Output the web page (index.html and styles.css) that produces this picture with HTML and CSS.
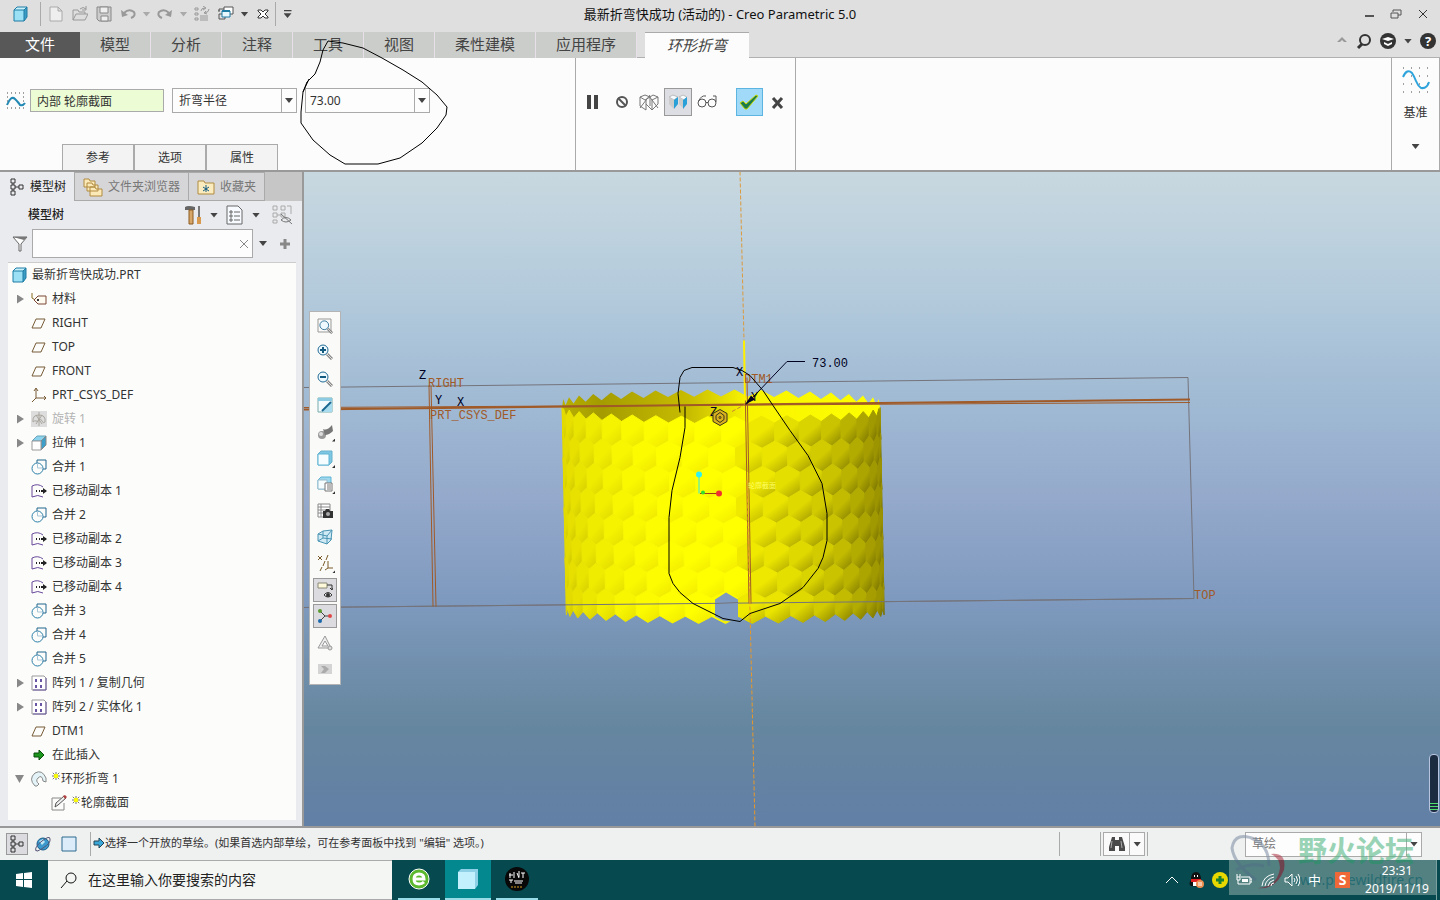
FILE: index.html
```html
<!doctype html>
<html lang="zh-CN">
	<head>
		<meta charset="utf-8">
		<title>最新折弯快成功 (活动的) - Creo Parametric 5.0</title>
		<link rel="stylesheet" href="styles.css">
	</head>
	<body>

		<svg class="defs" width="0" height="0">
			<symbol id="i-cube" viewBox="0 0 16 16"><path d="M2 4l3-3h10v10l-3 4H2z" fill="#9be0f4"/><path d="M12 4l3-3v10l-3 4z" fill="#3c9cc4"/><path d="M2 4l3-3h10l-3 3z" fill="#c9f1fb"/><path d="M2 4h10v11H2zM2 4l3-3h10v10l-3 4M12 4l3-3" fill="none" stroke="#1f7ca5"/></symbol>
			<symbol id="i-new" viewBox="0 0 16 16"><path d="M2 1h8l4 4v10H2zM10 1v4h4" fill="#eee" stroke="#aaa"/></symbol>
			<symbol id="i-open" viewBox="0 0 16 16"><path d="M1 14V4h5l1 2h6v2M1 14l3-6h12l-3 6z" fill="#ddd" stroke="#999"/><path d="M8 3q3-3 6 0M14 0v4h-4" fill="none" stroke="#999"/></symbol>
			<symbol id="i-save" viewBox="0 0 16 16"><path d="M1 1h14v14H3l-2-2z" fill="#ccc" stroke="#888"/><path d="M4 1h8v6H4zM5 10h7v5H5z" fill="#eee" stroke="#888"/></symbol>
			<symbol id="i-undo" viewBox="0 0 16 16"><path d="M4 7q5-5 10-1q2 4-3 6" fill="none" stroke="#999" stroke-width="2"/><path d="M1 4l1 7 6-2z" fill="#999"/></symbol>
			<symbol id="i-redo" viewBox="0 0 16 16"><path d="M12 7q-5-5-10-1q-2 4 3 6" fill="none" stroke="#999" stroke-width="2"/><path d="M15 4l-1 7-6-2z" fill="#999"/></symbol>
			<symbol id="i-regen" viewBox="0 0 16 16"><path d="M1 2h3v2H1zM1 7h3v2H1zM1 12h3v2H1zM6 10h8M6 12h8M6 14h8M7 5q0-3 4-3M9 0l3 2-3 2M15 3q0 3-4 4M13 8l-3-1 2-2" fill="none" stroke="#999"/></symbol>
			<symbol id="i-windows" viewBox="0 0 16 16"><path d="M1 5V3h5M1 6v-2M1 8h3M1 8v5h6v-2" fill="none" stroke="#555"/><path d="M6 1h9v7H6z" fill="#fff" stroke="#555"/><path d="M4 5h8v6H4z" fill="#e8f8ff" stroke="#1f7ca5"/><path d="M4 5h8" stroke="#1f7ca5" stroke-width="2"/></symbol>
			<symbol id="i-closewin" viewBox="0 0 16 16"><path d="M3 4h3l2 2 2-2h3v1l-3 3 3 3v1h-3l-2-2-2 2H3v-1l3-3-3-3z" fill="#fff" stroke="#333"/></symbol>
			<symbol id="i-x" viewBox="0 0 16 16"><path d="M4 4l8 8M12 4l-8 8" fill="none" stroke="currentColor" stroke-width="1"/></symbol>
			<symbol id="i-curve" viewBox="0 0 32 32"><path d="M3 3h1M11 3h1M19 3h1M27 3h1M3 11h1M11 11h1M19 11h1M27 11h1M3 19h1M11 19h1M19 19h1M27 19h1M3 27h1M11 27h1M19 27h1M27 27h1" stroke="#444"/><path d="M3 12q4-9 9-4q2 3 4 8t5 7q6 1 8-6" fill="none" stroke="#2fa4dc" stroke-width="2"/></symbol>
			<symbol id="i-wave" viewBox="0 0 20 18"><path d="M1 1h1M5 1h1M9 1h1M13 1h1M17 1h1M1 5h1M17 5h1M1 9h1M17 9h1M1 16h1M5 16h1M9 16h1M13 16h1M17 16h1" stroke="#444"/><path d="M1 13q4-10 8-6t5 6q3 1 5-2" fill="none" stroke="#2388b4" stroke-width="2"/></symbol>
			<symbol id="i-tree" viewBox="0 0 16 18"><path d="M2 1h4v4H2zM2 7h4v4H2zM2 13h4v4H2zM10 7h4v4h-4zM4 5v2M4 11v2M6 9h4" fill="none" stroke="#333"/></symbol>
			<symbol id="i-folders" viewBox="0 0 20 20"><path d="M1 2h5l1 2h5v6H1zM4 6h5l1 2h5v6H4zM7 10h5l1 2h6v7H7z" fill="#fbe9b8" stroke="#b08b40"/></symbol>
			<symbol id="i-fav" viewBox="0 0 18 16"><path d="M1 2h6l1 2h9v11H1z" fill="#fbecc0" stroke="#b08b40"/><path d="M9 6v7M6 8l6 4M12 8l-6 4" stroke="#125a80"/></symbol>
			<symbol id="i-tools" viewBox="0 0 18 20"><path d="M1 2q3-2 10 0v3H1z" fill="#666"/><path d="M5 5h4v14H5z" fill="#d7a76a" stroke="#8a5a20"/><path d="M15 1v11" stroke="#777" stroke-width="2"/><path d="M13 12h4v7h-4z" fill="#d79a4e"/></symbol>
			<symbol id="i-list" viewBox="0 0 18 20"><path d="M1 1h11l4 4v14H1z" fill="#f7fbff" stroke="#666"/><path d="M4 6h2v2H4zM4 10h2v2H4zM4 14h2v2H4zM8 7h6M8 11h6M8 15h6" fill="none" stroke="#666"/></symbol>
			<symbol id="i-treehide" viewBox="0 0 20 20"><path d="M1 1h4v4H1zM1 8h4v4H1zM1 15h4v3H1zM9 1h4v4H9zM9 8h4v4H9zM15 1h4v8M5 10h4" fill="none" stroke="#aaa"/><path d="M9 15q5-5 10 0q-5 4-10 0M9 9l11 10" fill="none" stroke="#777"/></symbol>
			<symbol id="i-filter" viewBox="0 0 16 16"><path d="M1 1h14L9 8v7H7V8z" fill="#fff" stroke="#666"/><path d="M1 1h14l-3 3z" fill="#777"/></symbol>
			<symbol id="i-tag" viewBox="0 0 16 16"><path d="M1 2v5l5 3" fill="none" stroke="#8a6a20"/><path d="M3 9l4-4h8v8H7z" fill="#fffaf0" stroke="#7a4636"/><path d="M6 9h2" stroke="#333" stroke-width="2"/></symbol>
			<symbol id="i-plane" viewBox="0 0 16 16"><path d="M5 4h9l-4 9H1z" fill="none" stroke="#775a35"/></symbol>
			<symbol id="i-csys" viewBox="0 0 16 16"><path d="M5 2v9h10M5 11l-4 4M3 4l2-3 2 3M13 9l2 2-2 2" fill="none" stroke="#775a35"/></symbol>
			<symbol id="i-revolve" viewBox="0 0 16 16"><path d="M0 0h16v16H0z" fill="#ddd"/><path d="M2 11q-1-7 6-7t6 7q-2 2-3-1t-3-1-3 1-3 1zM8 1v14M5 4l6 9M11 4l-6 9" fill="none" stroke="#aaa69e"/></symbol>
			<symbol id="i-extrude" viewBox="0 0 16 16"><path d="M1 6l5-5h9l-5 5z" fill="#8cd4ee" stroke="#6aa4bb"/><path d="M10 6l5-5v9l-5 5z" fill="#3e9fc8" stroke="#888"/><path d="M1 6h9v9H1z" fill="#fff" stroke="#999"/></symbol>
			<symbol id="i-merge" viewBox="0 0 16 16"><path d="M6 4V1h9v9h-3" fill="none" stroke="#22648d"/><circle cx="6.500" cy="9.500" r="5.500" fill="none" stroke="#2d7fa8"/><path d="M6.500 4v5h5" fill="none" stroke="#aac6d8"/></symbol>
			<symbol id="i-copy" viewBox="0 0 16 16"><path d="M1 14V3q6-3 11 1M1 14q6-3 11 0" fill="none" stroke="#68499a"/><path d="M5 8h1M8 8h1M10 8h5" fill="none" stroke="#222" stroke-width="2"/><path d="M12 5l4 3-4 3z" fill="#222"/></symbol>
			<symbol id="i-pattern" viewBox="0 0 16 16"><path d="M1 1h12l2 2v12H1z" fill="#fff" stroke="#999"/><path d="M15 3v12H2" fill="none" stroke="#6a58a0"/><path d="M4 4h2v3H4zM9 4h2v3H9zM4 10h2v3H4zM9 10h2v3H9z" fill="#6a54a4"/></symbol>
			<symbol id="i-insert" viewBox="0 0 16 16"><path d="M3 6h5V3l5 5-5 5v-3H3z" fill="#1d961d" stroke="#0a4d0a"/></symbol>
			<symbol id="i-bend" viewBox="0 0 16 16"><path d="M4 15Q-3 8 4 2q7-4 11 5v4l-3-1Q11 3 7 7q-3 3 1 6l-2 2z" fill="#e3f3f7" stroke="#888"/></symbol>
			<symbol id="i-sketch" viewBox="0 0 16 16"><path d="M10 3H1v12h12V8" fill="none" stroke="#888"/><path d="M4 12l1-4 8-7 2 2-8 7z" fill="#eee" stroke="#555"/><path d="M12 1l2-1 2 2-2 2z" fill="#b04040"/></symbol>
			<symbol id="i-star" viewBox="0 0 10 10"><path d="M5 0v10M0 5h10M1 1l8 8M9 1L1 9" stroke="#555"/><path d="M3 3h4v4H3z" fill="#ff0" stroke="#ff0"/></symbol>
			<symbol id="i-globe" viewBox="0 0 16 16"><circle cx="8" cy="8" r="6" fill="#3a98cc" stroke="#1a5e88"/><path d="M4 5l4-2 2 3-3 3z" fill="#bfe4f4"/><path d="M1 15Q-1 11 7 5t8-2q1 4-7 9t-6 2" fill="none" stroke="#557"/></symbol>
			<symbol id="i-pane" viewBox="0 0 16 16"><path d="M1 1h14v14H1z" fill="#dcecf8" stroke="#2c6b8f"/></symbol>
			<symbol id="i-arrow" viewBox="0 0 12 12"><path d="M1 4h5V1l5 5-5 5V8H1z" fill="#3ba6d8" stroke="#245"/></symbol>
			<symbol id="i-binoc" viewBox="0 0 18 16"><path d="M4 1h3v3h4V1h3l3 10v4h-6v-5H7v5H1v-4z" fill="#4a4a4a"/><path d="M4 5l-1 7M13 5l1 7" stroke="#aaa"/></symbol>
			<symbol id="i-lens" viewBox="0 0 16 16"><path d="M10 10l5 5" stroke="#888" stroke-width="3"/><path d="M10 10l5 5" stroke="#ddd"/><circle cx="6" cy="6" r="5" fill="#eefaff" stroke="#226a94"/></symbol>
		</svg>

		<header class="titlebar">
			<div class="quick">
				<svg class="i16 app"><use href="#i-cube"/></svg>
				<span class="sep"></span>
				<button aria-label="新建"><svg class="i16"><use href="#i-new"/></svg></button>
				<button aria-label="打开"><svg class="i16"><use href="#i-open"/></svg></button>
				<button aria-label="保存"><svg class="i16"><use href="#i-save"/></svg></button>
				<button aria-label="撤消"><svg class="i16"><use href="#i-undo"/></svg></button>
				<button class="drop" aria-label="撤消列表"><i class="caret dim"></i></button>
				<button aria-label="重做"><svg class="i16"><use href="#i-redo"/></svg></button>
				<button class="drop" aria-label="重做列表"><i class="caret dim"></i></button>
				<button aria-label="重新生成"><svg class="i16"><use href="#i-regen"/></svg></button>
				<button aria-label="窗口"><svg class="i16"><use href="#i-windows"/></svg></button>
				<button class="drop" aria-label="窗口列表"><i class="caret"></i></button>
				<button aria-label="关闭"><svg class="i16"><use href="#i-closewin"/></svg></button>
				<span class="sep"></span>
				<button class="drop" aria-label="自定义"><i class="caret lined"></i></button>
			</div>
			<div class="title">最新折弯快成功 (活动的) - Creo Parametric 5.0</div>
			<div class="win">
				<button aria-label="最小化"><svg class="i16" viewBox="0 0 16 16"><path d="M4 10h9" stroke="#555" stroke-width="2"/></svg></button>
				<button aria-label="还原"><svg class="i16" viewBox="0 0 16 16"><path d="M5 6V4h8v5h-3M3 7h7v5H3z" fill="none" stroke="#555"/></svg></button>
				<button aria-label="关闭窗口"><svg class="i16"><use href="#i-x"/></svg></button>
			</div>
		</header>

		<nav class="tabs">
			<button class="tab file">文件</button>
			<button class="tab">模型</button>
			<button class="tab">分析</button>
			<button class="tab">注释</button>
			<button class="tab">工具</button>
			<button class="tab">视图</button>
			<button class="tab">柔性建模</button>
			<button class="tab">应用程序</button>
			<button class="tab active">环形折弯</button>
			<div class="help">
				<svg width="12" height="16" viewBox="0 0 12 16"><path d="M1 9l5-5 5 5H8L6 7 4 9z" fill="#999"/></svg>
				<svg width="16" height="18" viewBox="0 0 16 18"><circle cx="9" cy="8" r="5" fill="none" stroke="#333" stroke-width="2"/><path d="M6 12l-4 4" stroke="#333" stroke-width="3"/></svg>
				<svg width="16" height="18" viewBox="0 0 16 18"><circle cx="8" cy="9" r="8" fill="#333"/><path d="M2 7l6-2 6 2-6 2zM4 10l4 2 4-2v2l-4 2-4-2z" fill="#fff"/></svg>
				<i class="caret"></i>
				<span class="ask">?</span>
			</div>
		</nav>

		<section class="ribbon">
			<div class="group feature">
				<div class="fields">
					<svg width="20" height="18"><use href="#i-wave"/></svg>
					<input class="section" type="text" aria-label="轮廓截面" value="内部 轮廓截面">
					<div class="combo">
						<select aria-label="折弯方式"><option>折弯半径</option></select>
						<span class="open"><i class="caret"></i></span>
					</div>
					<div class="combo radius">
						<input type="text" aria-label="折弯半径" value="73.00">
						<button class="open" aria-label="最近的值"><i class="caret"></i></button>
					</div>
				</div>
				<div class="panels">
					<button>参考</button>
					<button>选项</button>
					<button>属性</button>
				</div>
			</div>
			<div class="group control">
				<button aria-label="暂停"><svg class="i20" viewBox="0 0 20 20"><path d="M5 3h4v14H5zM12 3h4v14h-4z" fill="#444"/></svg></button>
				<button aria-label="无预览"><svg class="i20" viewBox="0 0 20 20"><circle cx="11" cy="10" r="5" fill="none" stroke="#555" stroke-width="2"/><path d="M7 6l8 8" stroke="#555" stroke-width="2"/></svg></button>
				<button aria-label="分离预览"><svg class="i20" viewBox="0 0 20 20"><path d="M1 5l5-2 5 2-5 3zM1 5v9l6 4V8M11 5l3-2 5 2-6 3v10l-6-6M11 5v9M19 5v7l-6 6M1 16L11 3M10 4l9 12" fill="none" stroke="#777"/></svg></button>
				<button class="on" aria-label="连接预览"><svg class="i20" viewBox="0 0 20 20"><path d="M1 5l4-2 5 2-4 3zM11 5l4-2 4 2-3 3z" fill="#f5fbff" stroke="#bbb"/><path d="M1 5l5 3v9l-5-5zM11 5l5 3v9l-5-5z" fill="#ccc"/><path d="M6 8l4-3v7l-4 5zM15 8l4-3v7l-4 5z" fill="#2aa0d8"/></svg></button>
				<button aria-label="检查"><svg class="i20" viewBox="0 0 20 20"><circle cx="5" cy="11" r="4" fill="none" stroke="#555"/><circle cx="15" cy="11" r="4" fill="none" stroke="#555"/><path d="M2 9q2-6 7-5M9 11q1-2 2 0M19 10V4h-3" fill="none" stroke="#555"/></svg></button>
				<button class="ok" aria-label="确定"><svg class="i20" viewBox="0 0 20 20"><path d="M1 11l3-2 3 3 10-9 2 1L8 17H6z" fill="#1a7c4c" stroke="#c8d800"/></svg></button>
				<button aria-label="取消"><svg class="i20" viewBox="0 0 20 20"><path d="M5 6l9 10M14 6L5 16" stroke="#444" stroke-width="3"/></svg></button>
			</div>
			<div class="group empty"></div>
			<div class="group datum">
				<svg width="32" height="32"><use href="#i-curve"/></svg>
				<span>基准</span>
				<i class="caret"></i>
			</div>
		</section>

		<main>
			<aside>
				<div class="side-tabs">
					<button class="current"><svg width="16" height="18"><use href="#i-tree"/></svg>模型树</button>
					<button><svg width="20" height="20"><use href="#i-folders"/></svg>文件夹浏览器</button>
					<button><svg width="18" height="16"><use href="#i-fav"/></svg>收藏夹</button>
				</div>
				<div class="side-head">
					<h2>模型树</h2>
					<svg width="18" height="20"><use href="#i-tools"/></svg>
					<i class="caret"></i>
					<svg width="18" height="20"><use href="#i-list"/></svg>
					<i class="caret"></i>
					<svg width="20" height="20"><use href="#i-treehide"/></svg>
				</div>
				<div class="side-search">
					<svg class="i16"><use href="#i-filter"/></svg>
					<div class="box">
						<input type="text" aria-label="搜索模型树">
						<button aria-label="清除"><svg class="i16"><use href="#i-x"/></svg></button>
					</div>
					<i class="caret"></i>
					<svg width="14" height="14" viewBox="0 0 14 14"><path d="M7 2v10M2 7h10" stroke="#888" stroke-width="3"/></svg>
				</div>
				<ul class="tree">
					<li class="root"><svg class="i16"><use href="#i-cube"/></svg>最新折弯快成功.PRT</li>
					<li class="closed"><svg class="i16"><use href="#i-tag"/></svg>材料</li>
					<li><svg class="i16"><use href="#i-plane"/></svg>RIGHT</li>
					<li><svg class="i16"><use href="#i-plane"/></svg>TOP</li>
					<li><svg class="i16"><use href="#i-plane"/></svg>FRONT</li>
					<li><svg class="i16"><use href="#i-csys"/></svg>PRT_CSYS_DEF</li>
					<li class="closed muted"><svg class="i16"><use href="#i-revolve"/></svg>旋转 1</li>
					<li class="closed"><svg class="i16"><use href="#i-extrude"/></svg>拉伸 1</li>
					<li><svg class="i16"><use href="#i-merge"/></svg>合并 1</li>
					<li><svg class="i16"><use href="#i-copy"/></svg>已移动副本 1</li>
					<li><svg class="i16"><use href="#i-merge"/></svg>合并 2</li>
					<li><svg class="i16"><use href="#i-copy"/></svg>已移动副本 2</li>
					<li><svg class="i16"><use href="#i-copy"/></svg>已移动副本 3</li>
					<li><svg class="i16"><use href="#i-copy"/></svg>已移动副本 4</li>
					<li><svg class="i16"><use href="#i-merge"/></svg>合并 3</li>
					<li><svg class="i16"><use href="#i-merge"/></svg>合并 4</li>
					<li><svg class="i16"><use href="#i-merge"/></svg>合并 5</li>
					<li class="closed"><svg class="i16"><use href="#i-pattern"/></svg>阵列 1 / 复制几何</li>
					<li class="closed"><svg class="i16"><use href="#i-pattern"/></svg>阵列 2 / 实体化 1</li>
					<li><svg class="i16"><use href="#i-plane"/></svg>DTM1</li>
					<li><svg class="i16"><use href="#i-insert"/></svg>在此插入</li>
					<li class="opened"><svg class="i16"><use href="#i-bend"/></svg><svg class="star"><use href="#i-star"/></svg>环形折弯 1</li>
					<li class="child"><svg class="i16"><use href="#i-sketch"/></svg><svg class="star"><use href="#i-star"/></svg>轮廓截面</li>
				</ul>
			</aside>

			<div class="viewport">
				<svg class="scene" viewBox="304 171 1136 655" preserveAspectRatio="xMidYMid slice">
					<defs>
						<linearGradient id="inner"><stop offset="0" stop-color="#b8b000"/><stop offset=".12" stop-color="#a49c00"/><stop offset=".4" stop-color="#c8bc00"/><stop offset=".58" stop-color="#f8f400"/><stop offset="1" stop-color="#ff0"/></linearGradient>
					</defs>
					<g fill="none" stroke="#74747c">
						<path d="M304 387L1188 377L1194 598L304 607"/>
					</g>
					<path d="M740 171L744 340" fill="none" stroke="#dc9a3c" stroke-dasharray="4 2"/>
					<g id="part"></g>
					<path d="M304 607L1194 598" fill="none" stroke="#74747c"/>
					<path d="M715 599l11-7 12 7v19l-7 3-8-1-8-4z" fill="#7f9abf"/>
					<path d="M715 603l23-1" stroke="#74747c"/>
					<g fill="none" stroke="#a05a28">
						<path d="M304 409L1190 399" stroke-width="2"/>
						<path d="M304 407L1190 402"/>
						<path d="M429 385L433 606M431 385L436 606"/>
						<path d="M745 377L749 603M747 377L751 603"/>
					</g>
					<path d="M744 340L745 400" stroke="#fff000" stroke-width="2"/>
					<path d="M747 480L755 826" fill="none" stroke="#e89828" stroke-dasharray="4 2"/>
					<path d="M732 411l13-7" stroke="#c88830" stroke-dasharray="4 2"/>
					<g class="note brown">
						<text x="428" y="386">RIGHT</text>
						<text x="430" y="418">PRT_CSYS_DEF</text>
						<text x="744" y="382">DTM1</text>
						<text x="1194" y="598">TOP</text>
					</g>
					<g class="note">
						<text x="419" y="378">Z</text>
						<text x="435" y="403">Y</text>
						<text x="457" y="405">X</text>
						<text x="736" y="375">X</text>
						<text x="710" y="415">Z</text>
						<text x="751" y="400">Y</text>
						<text x="812" y="366">73.00</text>
					</g>
					<text class="tiny" x="748" y="487">轮廓截面</text>
					<path d="M746 404L787 361H805" fill="none" stroke="#002"/>
					<path d="M745 404l6-9 4 4z" fill="#002"/>
					<g fill="none" stroke="#3a3518">
						<path d="M720 409l7 4v8l-7 4-7-4v-8z" fill="#d8b020"/>
						<path d="M720 412l4 3v4l-4 3-4-3v-4z"/>
						<circle cx="720" cy="417" r="1"/>
					</g>
					<path d="M699 473v20" stroke="#30e8e0"/><path d="M700 493h19" stroke="#a04010"/>
					<circle cx="699" cy="474" r="3" fill="#30f0f0"/><circle cx="703" cy="492" r="2" fill="#30e030"/><circle cx="719" cy="493" r="3" fill="#f03030"/>
					<path class="ink" d="M680 412L678 393L680 377L684 370L692 367H733L742 370L750 375L763 390L773 405L790 430L808 455L822 483L827 513V540L823 557L818 568L803 587L780 603L750 613L740 621L723 618L693 603L680 592L673 583L669 573V517L672 490L680 457L685 427V406"/>
				</svg>

				<div class="view-tools">
					<button aria-label="重新调整"><svg class="i16" viewBox="0 0 16 16"><path d="M1 1h13v13H1z" fill="none" stroke="#999"/><use href="#i-lens" x="2" y="2" width="14" height="14"/></svg></button>
					<button aria-label="放大"><svg class="i16" viewBox="0 0 16 16"><use href="#i-lens" width="16" height="16"/><path d="M3 6h6M6 3v6" stroke="#125a80" stroke-width="2"/></svg></button>
					<button aria-label="缩小"><svg class="i16" viewBox="0 0 16 16"><use href="#i-lens" width="16" height="16"/><path d="M3 6h6" stroke="#125a80" stroke-width="2"/></svg></button>
					<button aria-label="重画"><svg class="i16" viewBox="0 0 16 16"><path d="M1 1h14v14H1z" fill="#f4fbff" stroke="#7aa"/><path d="M1 1h14v3H1z" fill="#8ccbe2"/><path d="M15 5v10H5z" fill="#a8dcee"/><path d="M5 14l9-9" stroke="#1a6890" stroke-width="2"/></svg></button>
					<button class="more" aria-label="渲染"><svg class="i16" viewBox="0 0 16 16"><circle cx="5" cy="11" r="4" fill="#999"/><path d="M6 5q4 2 9-4l1 6q-4 4-8 4z" fill="#777"/><circle cx="4" cy="10" r="2" fill="#ddd"/></svg></button>
					<button class="more" aria-label="显示样式"><svg class="i16" viewBox="0 0 16 16"><path d="M1 4l3-3h11v11l-3 3H1z" fill="#7cc8e4" stroke="#6ab0cc"/><path d="M1 4h11v11H1z" fill="#f5fdff" stroke="#5eb4d4"/></svg></button>
					<button class="more" aria-label="已保存方向"><svg class="i16" viewBox="0 0 16 16"><path d="M1 4l3-3h10v8l-3 4H1z" fill="#9cd8ee" stroke="#5eb4d4"/><path d="M1 4h9v9H1z" fill="#f5fdff" stroke="#9bc"/><path d="M8 7h7v8H8zM10 9h4M10 11h4M10 13h4" fill="#fff" stroke="#777"/></svg></button>
					<button aria-label="视图管理器"><svg class="i16" viewBox="0 0 16 16"><path d="M1 1h12v13H1zM1 4h12M1 7h12M1 10h12M4 1v13" fill="#fff" stroke="#888"/><path d="M6 8h2l1-2h3l1 2h3v7H6z" fill="#333"/><circle cx="11" cy="11" r="2" fill="#aaa"/></svg></button>
					<button aria-label="透视图"><svg class="i16" viewBox="0 0 16 16"><path d="M1 5l5-3 9-1-1 10-4 4-9-3z" fill="#cfeaf4" stroke="#4a94b4"/><path d="M1 5l9 2 5-6M10 7v8M6 2v7l9 1M6 9l-5 3" fill="none" stroke="#4a94b4"/></svg></button>
					<button class="more" aria-label="基准显示"><svg class="i16" viewBox="0 0 16 16"><path d="M1 1l4 4M5 1L1 5M11 0L9 5M8 6l-2 5M5 12l-2 4M11 6v7h5M11 13l-3 2" fill="none" stroke="#7a5a28"/></svg></button>
					<button class="on" aria-label="注释显示"><svg class="i16" viewBox="0 0 16 16"><path d="M1 1h9v5H1z" fill="#fff9dc" stroke="#887"/><path d="M10 3h5v4M13 6l2 2 1-2" fill="none" stroke="#333"/><path d="M7 13q4-5 8 0q-4 4-8 0z" fill="#fff" stroke="#333"/><circle cx="11" cy="13" r="2" fill="#333"/></svg></button>
					<button class="on" aria-label="旋转中心"><svg class="i16" viewBox="0 0 16 16"><path d="M3 3l5 5-5 5M8 8h5" fill="none" stroke="#444"/><circle cx="3" cy="3" r="2" fill="#5a9a30"/><circle cx="3" cy="13" r="2" fill="#1a68a8"/><circle cx="13" cy="8" r="2" fill="#e04848"/></svg></button>
					<button aria-label="仿真"><svg class="i16" viewBox="0 0 16 16"><path d="M8 1l6 12H1zM8 6l-3 5h6z" fill="#eee" stroke="#999"/><circle cx="13" cy="13" r="2" fill="#ddd" stroke="#999"/></svg></button>
					<button aria-label="动画"><svg class="i16" viewBox="0 0 16 16"><path d="M1 3h14v10H1z" fill="#d4d4d4"/><path d="M4 5h4l4 3-4 4H4l3-4z" fill="#aaa"/></svg></button>
				</div>
				<div class="meter"></div>
			</div>
		</main>

		<div class="statusbar">
			<button class="on" aria-label="模型树"><svg width="16" height="18"><use href="#i-tree"/></svg></button>
			<button aria-label="浏览器"><svg class="i16"><use href="#i-globe"/></svg></button>
			<button aria-label="全屏"><svg class="i16"><use href="#i-pane"/></svg></button>
			<span class="sep"></span>
			<p><svg width="12" height="12"><use href="#i-arrow"/></svg>选择一个开放的草绘。(如果首选内部草绘，可在参考面板中找到 "编辑" 选项。)</p>
			<span class="sep gap"></span>
			<span class="sep"></span>
			<div class="find">
				<button aria-label="查找"><svg width="18" height="16"><use href="#i-binoc"/></svg></button>
				<button class="open" aria-label="查找选项"><i class="caret"></i></button>
			</div>
			<span class="sep"></span>
			<div class="combo filter">
				<select aria-label="选择过滤器"><option>草绘</option></select>
				<span class="open"><i class="caret"></i></span>
			</div>
		</div>

		<footer class="taskbar">
			<button class="start" aria-label="开始"><svg class="i16" viewBox="0 0 16 16"><path d="M0 2l7-1v6H0zM8 1l8-1v7H8zM0 8h7v7l-7-1zM8 8h8v8l-8-1z" fill="#fff"/></svg></button>
			<label class="find-box">
				<svg width="18" height="18" viewBox="0 0 18 18"><circle cx="11" cy="7" r="5" fill="none" stroke="#111" stroke-width="1"/><path d="M7 10l-6 7" stroke="#111" stroke-width="1"/></svg>
				<input type="text" placeholder="在这里输入你要搜索的内容" aria-label="搜索">
			</label>
			<div class="apps">
				<button aria-label="浏览器"><svg width="24" height="24" viewBox="0 0 24 24"><circle cx="12" cy="12" r="10" fill="#5cb82c" stroke="#fff"/><path d="M7 12h10q0-5-5-5t-5 5q0 5 5 5 3 0 5-2" fill="none" stroke="#fff" stroke-width="3"/></svg></button>
				<button class="current" aria-label="Creo"><svg width="22" height="22" viewBox="0 0 22 22"><path d="M1 4l3-3h17v16l-3 4H1z" fill="#8ed0e6"/><path d="M1 4h17v17H1z" fill="#c2f0fc"/></svg></button>
				<button aria-label="录像"><svg width="24" height="24" viewBox="0 0 24 24"><circle cx="12" cy="12" r="12" fill="#080808"/><path d="M5 6v5M4 8h4M9 5v6M12 6l2 5M14 4v6M16 6h4M18 6v5M4 13h4M6 13v3M9 14h9M10 16h7" stroke="#fff"/><path d="M6 20h12" stroke="#d8a020" stroke-dasharray="2 1"/></svg></button>
			</div>
			<div class="tray">
				<svg class="i16" viewBox="0 0 16 16"><path d="M2 11l6-6 6 6" fill="none" stroke="#fff"/></svg>
				<svg class="i16" viewBox="0 0 16 16"><path d="M3 14q-3-2 0-6 0-8 5-8t5 8q2 4 0 7z" fill="#111"/><path d="M5 8h6v6H5z" fill="#fff"/><path d="M3 7h10v3H3z" fill="#e02020"/><path d="M6 3h1v2H6zM9 3h1v2H9z" fill="#fff"/><circle cx="12" cy="12" r="4" fill="#f09050"/><path d="M10 11h4M10 13h4" stroke="#fff"/></svg>
				<svg class="i16" viewBox="0 0 16 16"><circle cx="8" cy="8" r="8" fill="#e8d800"/><path d="M8 4v8M4 8h8" stroke="#1a8030" stroke-width="3"/></svg>
				<svg class="i16" viewBox="0 0 16 16"><path d="M5 5h9v7H4M14 7h2v3h-2M1 2v3M4 2v3M1 5h3v3H1zM2 8v4h2" fill="none" stroke="#fff"/><path d="M6 7h6v3H6z" fill="#fff"/></svg>
				<svg class="i16" viewBox="0 0 16 16"><path d="M2 14Q3 4 14 2M5 14Q6 7 14 5M8 14q1-5 6-6M11 14q0-3 3-3" fill="none" stroke="#fff"/></svg>
				<svg class="i16" viewBox="0 0 16 16"><path d="M1 6h3l4-4v12l-4-4H1zM10 6q2 2 0 4M12 4q3 4 0 8M14 2q4 6 0 12" fill="none" stroke="#fff"/></svg>
				<span class="ime">中</span>
				<span class="sogou">S</span>
			</div>
			<div class="clock"><span>23:31</span><span>2019/11/19</span></div>
		</footer>

		<svg class="pen" width="152" height="126" viewBox="298 40 152 126"><path class="ink" d="M328 41L343 43L363 48L382 58L403 70L422 82L437 95L447 107L446 115L437 128L422 143L400 158L378 164H345L330 155L313 140L301 123V112L303 92L307 82L315 74L320 62L323 50L328 41M303 92L309 79"/></svg>

		<div class="mark">
			<svg width="60" height="60" viewBox="0 0 60 60" fill="none"><path d="M28 6Q6-4 3 14q2 16 24 32M7 36q14-8 28-4M22 4q18 6 18 28" stroke="#8494a8" stroke-width="3"/><path d="M42 20q16-2 13 16-8 20-26 18 20-2 22-20 0-10-9-14z" fill="#b04050"/></svg>
			<div><strong>野火论坛</strong><em>www.proewildfire.cn</em></div>
		</div>

		<script src="scene.js"></script>
	</body>
</html>
```
FILE: styles.css
```css
* {
	box-sizing: border-box;
	margin: 0;
	padding: 0;
}

html,
body {
	height: 100%;
}

body {
	position: relative;
	display: flex;
	flex-direction: column;
	overflow: hidden;
	background: #e4e4e4;
	font-family: "Noto Sans", "Noto Sans CJK SC", sans-serif;
	font-size: 12px;
	line-height: 16px;
	color: #333;
}

button,
input,
select {
	font: inherit;
	color: inherit;
	border: 0;
	background: none;
	border-radius: 0;
	outline: none;
	min-width: 0;
}
select {
	appearance: none;
}
svg {
	display: block;
	flex: none;
}
.defs {
	position: absolute;
}

.i16 { width: 16px; height: 16px; }
.i20 { width: 20px; height: 20px; }

.caret {
	display: block;
	flex: none;
	width: 8px;
	height: 5px;
	background: #444;
	clip-path: polygon(0 0, 100% 0, 50% 100%);
}
	.caret.dim {
		background: #aaa;
	}
	.caret.lined {
		height: 8px;
		clip-path: polygon(0 0, 100% 0, 100% 15%, 0 15%, 0 40%, 100% 40%, 50% 100%, 0 40%);
	}

.sep {
	flex: none;
	width: 1px;
	height: 24px;
	background: #aaa;
}

/* title bar */
.titlebar {
	display: grid;
	grid-template-columns: 1fr auto 1fr;
	align-items: center;
	flex: none;
	height: 32px;
	padding-bottom: 4px;
	background: #dfdfe0;
}
.title {
	font-size: 13px;
	color: #111;
}
.quick,
.win {
	display: flex;
	align-items: center;
}
	.quick .app {
		margin: 0 12px;
	}
	.quick .sep {
		margin-right: 3px;
	}
	.quick button,
	.win button {
		display: flex;
		justify-content: center;
		align-items: center;
		width: 24px;
		height: 24px;
	}
	.quick .drop {
		width: 13px;
	}
	.quick .sep + .drop {
		margin-left: 2px;
	}
.win {
	justify-content: flex-end;
	gap: 3px;
	padding-right: 5px;
}

/* ribbon tabs */
.tabs {
	display: flex;
	flex: none;
	height: 26px;
	background: #dfdfe0;
	border-bottom: 1px solid #b0b0b0;
}
.tab {
	height: 26px;
	padding: 0 20px 2px;
	border-right: 1px solid #e8e0e8;
	background: #cbcdcb;
	font-size: 15px;
	color: #444;
}
	.tab.file {
		width: 80px;
		background: #585858;
		border: 0;
		color: white;
	}
	.tab.active {
		margin-left: 8px;
		padding: 0 22px 2px;
		background: #fbfcfb;
		border: 0;
		border-top: 1px solid #aaa;
		font-style: italic;
	}
.help {
	display: flex;
	align-items: center;
	gap: 8px;
	margin-left: auto;
	padding: 0 4px 7px 0;
}
	.ask {
		width: 16px;
		height: 16px;
		border-radius: 8px;
		background: #333;
		color: white;
		text-align: center;
		font-weight: bold;
		font-size: 13px;
	}

/* ribbon */
.ribbon {
	display: flex;
	flex: none;
	height: 114px;
	background: #fbfcfb;
	border-bottom: 2px solid #999;
}
.group {
	border-right: 1px solid #aaa;
}
.feature {
	display: flex;
	flex-direction: column;
	justify-content: space-between;
	width: 576px;
	padding-top: 30px;
}
.fields {
	display: flex;
	align-items: center;
	gap: 8px;
	padding-left: 6px;
}
	.fields svg {
		margin-right: -4px;
	}
	.section {
		width: 134px;
		height: 23px;
		padding: 0 6px;
		border: 1px solid #aaa;
		background: #ecfcd4;
	}
.combo {
	display: flex;
	width: 125px;
	height: 25px;
	border: 1px solid #aaa;
	background: #fdfdfd;
}
	.combo select,
	.combo input {
		flex: 1;
		padding: 0 6px;
	}
	.combo.radius input {
		padding: 0 4px;
	}
	.open {
		display: flex;
		justify-content: center;
		align-items: center;
		width: 15px;
		border-left: 1px solid #aaa;
		pointer-events: none;
	}
.panels {
	display: flex;
	padding-left: 62px;
}
	.panels button {
		width: 72px;
		height: 26px;
		border: 1px solid #aaa;
		border-width: 1px 1px 0 1px;
		background: #f2f3f2;
	}
.control {
	display: flex;
	width: 220px;
	padding: 30px 2px;
}
	.control button {
		display: flex;
		justify-content: center;
		align-items: center;
		width: 28px;
		height: 28px;
		margin-right: 1px;
	}
	.control .on {
		background: #dddde4;
		border: 1px solid #999;
	}
	.control .ok {
		margin-left: 14px;
		background: #a0daf8;
		border: 1px solid #5cb4e0;
	}
.empty {
	flex: 1;
}
.datum {
	display: flex;
	flex-direction: column;
	align-items: center;
	width: 48px;
	padding-top: 7px;
}
	.datum span {
		margin: 8px 0 23px;
	}

/* model tree */
main {
	display: flex;
	flex: 1;
	min-height: 0;
}
aside {
	display: flex;
	flex-direction: column;
	width: 304px;
	padding-bottom: 6px;
	background: #eaebee;
	border-right: 2px solid #999;
}
.side-tabs {
	display: flex;
	flex: none;
	height: 29px;
	background: #c6c6c6;
}
	.side-tabs button {
		display: flex;
		align-items: center;
		gap: 5px;
		padding: 0 8px;
		border: 1px solid #aaa;
		border-width: 1px 1px 1px 0;
		background: #d6d6d8;
		color: #777;
	}
	.side-tabs .current {
		border-width: 0 1px 0 0;
		background: #eaebee;
		color: #222;
		padding-left: 9px;
	}
.side-head {
	display: flex;
	align-items: center;
	gap: 8px;
	height: 28px;
	padding: 0 10px 0 28px;
}
	.side-head h2 {
		flex: 1;
		font-size: 12px;
		font-weight: 500;
		color: #222;
	}
	.side-head svg:last-child {
		margin-left: 4px;
	}
.side-search {
	display: flex;
	align-items: center;
	gap: 8px;
	height: 29px;
	padding: 0 10px 0 12px;
}
	.side-search svg:last-child {
		margin-left: 3px;
	}
	.side-search .box {
		display: flex;
		align-items: center;
		flex: 1;
		height: 29px;
		margin: 0 -2px 0 -4px;
		border: 1px solid #aaa;
		background: #fdfdfd;
		color: #888;
	}
	.box input {
		flex: 1;
		height: 27px;
		padding: 0 6px;
	}
.tree {
	flex: 1;
	margin: 4px 6px 0 8px;
	background: #fcfdfb;
	border-top: 1px solid #ccc;
	overflow: hidden;
	list-style: none;
}
	.tree li {
		position: relative;
		display: flex;
		align-items: center;
		gap: 5px;
		height: 24px;
		padding-left: 23px;
		white-space: nowrap;
	}
	.tree .root {
		padding-left: 3px;
	}
	.tree .child {
		padding-left: 43px;
	}
	.tree .muted {
		color: #b4b4b4;
	}
	.tree .star {
		width: 8px;
		height: 8px;
		margin: 0 -4px 6px 0;
	}
	.tree .closed::before,
	.tree .opened::before {
		content: "";
		position: absolute;
		left: 9px;
		width: 7px;
		height: 9px;
		background: #888;
		clip-path: polygon(0 0, 100% 50%, 0 100%);
	}
	.tree .opened::before {
		left: 7px;
		width: 9px;
		height: 8px;
		clip-path: polygon(0 0, 100% 0, 50% 100%);
	}

/* graphics window */
.viewport {
	position: relative;
	flex: 1;
	min-width: 0;
	background: linear-gradient(#c8d8e0, #b4cbdc 18%, #a0bad4 35%, #94a9cb 50%, #7f9abf 65%, #66879f 84%, #627fa6);
}
.scene {
	position: absolute;
	width: 100%;
	height: 100%;
}
	.note {
		font-family: "Liberation Mono", monospace;
		font-size: 12px;
		fill: #002;
	}
	.brown {
		fill: #a05a28;
	}
	.tiny {
		font-size: 7px;
		fill: #ffff60;
	}
.ink {
	fill: none;
	stroke: black;
	stroke-width: 1px;
}
.view-tools {
	position: absolute;
	left: 5px;
	top: 139px;
	display: flex;
	flex-direction: column;
	justify-content: space-between;
	align-items: center;
	width: 32px;
	height: 374px;
	padding: 2px 0 3px;
	background: #fafbf8;
	border: 1px solid #b4b4b4;
}
	.view-tools button {
		position: relative;
		display: flex;
		justify-content: center;
		align-items: center;
		width: 24px;
		height: 24px;
	}
	.view-tools .on {
		background: #dcdce0;
		border: 1px solid #999;
	}
	.view-tools .more::after {
		content: "";
		position: absolute;
		right: 2px;
		bottom: 2px;
		width: 3px;
		height: 3px;
		background: #333;
		clip-path: polygon(100% 0, 100% 100%, 0 100%);
	}
.meter {
	position: absolute;
	right: 1px;
	bottom: 13px;
	width: 10px;
	height: 59px;
	border: 1px solid #b8c4e0;
	border-radius: 4px;
	background: linear-gradient(#1c2c40 0 48px, #50e070 48px 49px, #1c2c40 49px 51px, #50e070 51px 52px, #1c2c40 52px 54px, #50e070 54px 55px, #1c2c40 55px);
}

/* status bar */
.statusbar {
	display: flex;
	align-items: center;
	flex: none;
	height: 34px;
	padding: 0 18px 0 6px;
	background: #eff0f0;
	border-top: 2px solid #999;
	font-size: 11px;
}
	.statusbar > button {
		display: flex;
		justify-content: center;
		align-items: center;
		width: 22px;
		height: 22px;
		margin-right: 4px;
	}
	.statusbar .on {
		background: #dcdce0;
		border: 1px solid #999;
	}
	.statusbar .sep {
		margin-left: 6px;
	}
	.statusbar p {
		display: flex;
		align-items: center;
		flex: 1;
		padding: 0 0 2px 2px;
	}
	.statusbar .gap {
		margin-right: 34px;
	}
	.find {
		display: flex;
		width: 42px;
		height: 24px;
		margin-left: 2px;
		border: 1px solid #aaa;
		background: #fafafa;
	}
	.find button:first-child {
		padding: 0 4px;
	}
	.find + .sep {
		margin-left: 2px;
	}
	.filter {
		width: 177px;
		margin-left: 97px;
		color: #777;
		font-size: 12px;
	}

/* taskbar */
.taskbar {
	display: flex;
	flex: none;
	height: 40px;
	background: #06494f;
	color: white;
}
.start {
	display: flex;
	justify-content: center;
	align-items: center;
	width: 48px;
}
.find-box {
	display: flex;
	align-items: center;
	gap: 10px;
	width: 344px;
	padding-left: 12px;
	background: #f4f6f4;
	border: 1px solid #aaa;
	border-width: 1px 0;
}
	.find-box input {
		flex: 1;
		font-size: 14px;
	}
	.find-box input::placeholder {
		color: #222;
	}
.apps {
	display: flex;
	gap: 5px;
	padding-left: 6px;
}
	.apps button {
		display: flex;
		justify-content: center;
		align-items: center;
		width: 42px;
		border-bottom: 2px solid #98dce8;
	}
	.apps .current {
		width: 46px;
		background: #048890;
	}
.tray,
.clock {
	position: relative;
	z-index: 2;
}
.tray {
	display: flex;
	align-items: center;
	gap: 8px;
	margin-left: auto;
}
	.ime {
		font-size: 13px;
	}
	.sogou {
		width: 15px;
		margin-left: 6px;
		background: #f06838;
		text-align: center;
		font-weight: bold;
		font-size: 14px;
	}
.clock {
	display: flex;
	flex-direction: column;
	align-items: center;
	width: 87px;
	margin-right: 3px;
	padding: 2px 0 0 8px;
	border-right: 1px solid #7aa0a0;
	line-height: 18px;
}

/* drawn over the windows */
.pen {
	position: absolute;
	left: 298px;
	top: 40px;
	pointer-events: none;
}
.mark {
	position: absolute;
	z-index: 1;
	right: 4px;
	bottom: 5px;
	display: flex;
	width: 207px;
	height: 61px;
	opacity: 0.6;
	background: linear-gradient(transparent 26px, rgba(220, 230, 220, 0.6) 26px);
	pointer-events: none;
}
	.mark div {
		display: flex;
		flex-direction: column;
	}
	.mark strong {
		padding-left: 9px;
		font-size: 29px;
		line-height: 34px;
		color: #58b888;
	}
	.mark em {
		font-size: 14px;
		font-style: normal;
		line-height: 24px;
		color: #3c848c;
	}
```
FILE: scene.js
```js
// honeycomb tube: hex cells wrapped round a vertical cylinder
var NS = 'http://www.w3.org/2000/svg';
var part = document.getElementById('part');
var CX = 723, R = 159, STEP = 27 / R, ROWS = 8, PITCH = 25;

function add( tag, attrs, parent ){
	var el = document.createElementNS( NS, tag );
	for( var k in attrs ) el.setAttribute( k, attrs[k] );
	(parent || part).appendChild( el );
	return el;
}

function mix( a, b, t ){
	t = Math.max( 0, Math.min( 1, t ) );
	return 'rgb(' + a.map(function(v, i){ return Math.round( v + (b[i] - v) * t ); }).join(',') + ')';
}

function project( angle, y ){
	var a = Math.max( -Math.PI / 2, Math.min( Math.PI / 2, angle ) );
	var py = y - 9 * (1 - Math.cos( a ));
	return [ CX + R * Math.sin( a ) + (py - 500) * 0.02, py ];
}

function points( list ){
	return list.map(function(p){ return p[0].toFixed(1) + ',' + p[1].toFixed(1); }).join(' ');
}

// inside of the far wall
var rim = [], i;
for( i = -20; i <= 20; i++ ) {
	var a = i * STEP / 2;
	if( Math.abs( a ) > Math.PI / 2 ) continue;
	rim.push([ CX - 2 + R * Math.sin( a ), 404 - 11 * Math.cos( a ) + (i % 2 ? -4 : 3) ]);
}
rim.push([ 879, 440 ], [ 565, 440 ]);
add( 'polygon', { points: points( rim ), fill: 'url(#inner)' } );

// near wall
for( var row = 0; row < ROWS; row++ ) {
	var y = 607 - (ROWS - 1 - row) * PITCH;
	var shift = (ROWS - 1 - row) % 2 ? 0.5 : 0;

	for( i = -10; i <= 10; i++ ) {
		var c = (i + shift) * STEP;
		if( Math.abs( c ) > Math.PI / 2 + STEP / 2 ) continue;

		var s = Math.sin( Math.max( -1.57, Math.min( 1.57, c ) ) );
		var light, dark;
		if( s > 0.1 ) {
			light = mix( [240, 234, 0], [150, 142, 0], (s - 0.1) * (s - 0.1) * 1.2 );
			dark = mix( [206, 198, 0], [116, 110, 0], (s - 0.1) * 1.1 );
		} else {
			light = mix( [255, 255, 0], [226, 218, 0], -s * s * s );
			dark = mix( [242, 236, 0], [204, 196, 0], -s * s * s );
		}
		var id = 'g' + row + '_' + (i + 10);
		var g = add( 'linearGradient', { id: id, x1: 0.2, y1: 0, x2: 0.8, y2: 1 } );
		add( 'stop', { offset: 0.5, 'stop-color': light }, g );
		add( 'stop', { offset: 1, 'stop-color': dark }, g );

		var h = STEP / 2;
		add( 'polygon', {
			points: points([
				project( c, y - 16 ), project( c + h, y - 9 ), project( c + h, y + 9 ),
				project( c, y + 16 ), project( c - h, y + 9 ), project( c - h, y - 9 )
			]),
			fill: 'url(#' + id + ')',
			stroke: 'url(#' + id + ')'
		});
	}
}
```
